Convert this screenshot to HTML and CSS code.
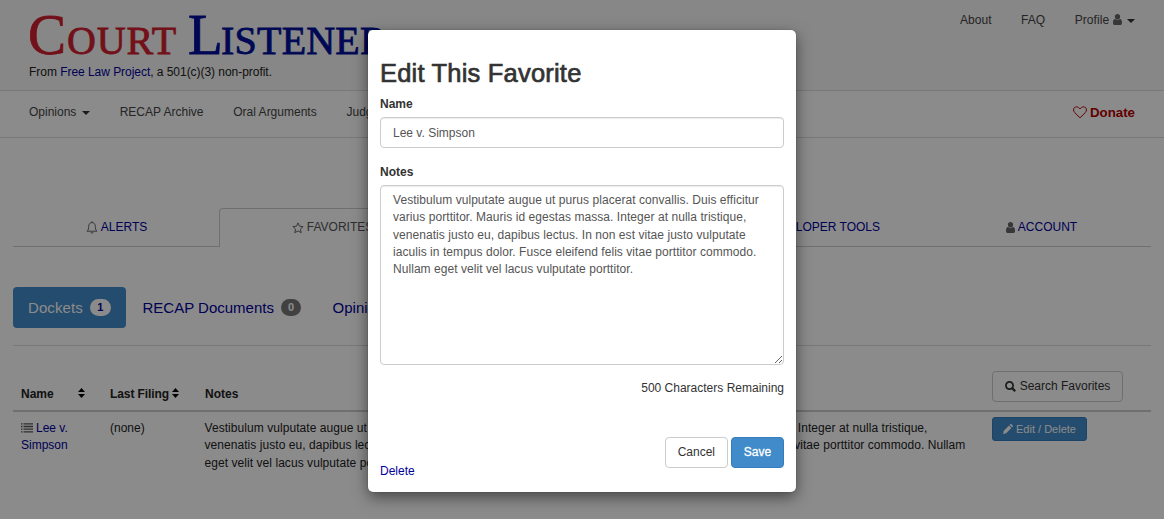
FILE: index.html
```html
<!DOCTYPE html>
<html lang="en">
<head>
<meta charset="utf-8">
<title>Favorites</title>
<link rel="stylesheet" href="styles.css">
</head>
<body>
<svg class="defs" width="0" height="0">
  <symbol id="user" viewBox="0 0 9 11"><path d="M4.5 0a2.6 2.6 0 0 1 2.6 2.7c0 1.6-1 2.9-2.6 2.9S1.900 4.300 1.900 2.700A2.600 2.600 0 0 1 4.500 0zM2 5C3.400 6.500 5.600 6.500 7 5c1.500.1 2 1.800 2 3.700C9 10.200 8.300 11 7.200 11H1.800C.7 11 0 10.200 0 8.700 0 6.800.5 5.100 2 5z"/></symbol>
  <symbol id="sort" viewBox="0 0 7 10"><path d="M3.500 0L7 4H0zM0 6h7L3.500 10z"/></symbol>
</svg>
<div class="page">
  <header class="top">
    <div class="brand">
      <div class="logo"><span class="red"><b class="c">C</b>ourt</span><span class="blue"><b class="l">L</b>istener</span></div>
      <p class="tagline">From <a>Free Law Project</a>, a 501(c)(3) non-profit.</p>
    </div>
    <nav class="links"><span>About</span><span>FAQ</span><span>Profile <svg class="user" width="9" height="11"><use href="#user"/></svg><i class="caret"></i></span></nav>
  </header>
  <nav class="mainnav">
    <span>Opinions<i class="caret"></i></span><span>RECAP Archive</span><span>Oral Arguments</span><span>Judges</span>
    <span class="donate"><svg width="14" height="13" viewBox="0 0 14 13"><path d="M7 11.800L1.600 6.500C.3 5.200.2 3 1.400 1.700 2.800.4 5.300.5 7 3 8.700.5 11.200.4 12.600 1.700c1.200 1.300 1.100 3.500-.2 4.800z" fill="none" stroke="currentColor"/></svg>Donate</span>
  </nav>
  <main class="content">
    <nav class="tabs">
      <a><svg width="12" height="13" viewBox="0 0 12 13"><path d="M6 .3v1M1 10.200C2.500 9 2.600 7.500 2.700 5.200 2.900 2.700 4 1.600 6 1.600s3.100 1.100 3.300 3.600c.1 2.300.2 3.800 1.700 5zM4.800 11.200c.3 1.400 2.100 1.400 2.400 0" fill="none" stroke="#666"/></svg>ALERTS</a>
      <a class="on"><svg width="12" height="12" viewBox="0 0 12 12"><path d="M6 .9l1.500 3.300 3.600.4-2.700 2.500.8 3.600L6 8.900l-3.200 1.800.8-3.600L.9 4.600l3.600-.4z" fill="none" stroke="#666"/></svg>FAVORITES</a>
      <a>TAGS</a>
      <a class="dev">DEVELOPER TOOLS</a>
      <a><svg width="9" height="11" class="gray"><use href="#user"/></svg>ACCOUNT</a>
    </nav>
    <nav class="pills"><a class="active">Dockets<em>1</em></a><a>RECAP Documents<em>0</em></a><a>Opinions<em>0</em></a></nav>
    <div class="table">
      <div class="row head">
        <div class="namehead">Name<svg width="7" height="10"><use href="#sort"/></svg></div>
        <div class="filing">Last Filing<svg class="near" width="7" height="10"><use href="#sort"/></svg></div>
        <div>Notes</div>
        <div class="action"><button class="btn search"><svg width="11" height="11" viewBox="0 0 11 11"><path d="M6.900 6.900L10.200 10.200" stroke="currentColor" stroke-width="2.200"/><circle cx="4.500" cy="4.500" r="3.600" fill="none" stroke="currentColor" stroke-width="1.700"/></svg>Search Favorites</button></div>
      </div>
      <div class="row">
        <div><a><svg class="list" width="12" height="10" viewBox="0 0 12 10"><path d="M0 .8h1.500M0 3.500h1.500M0 6.200h1.500M0 8.900h1.500M2.500.8H12M2.500 3.500H12M2.500 6.200H12M2.500 8.900H12" stroke="#555" stroke-width="1.300"/></svg>Lee v. Simpson</a></div>
        <div>(none)</div>
        <div class="notes">Vestibulum vulputate augue ut purus placerat convallis. Duis efficitur varius porttitor. Mauris id egestas massa. Integer at nulla tristique,<br>venenatis justo eu, dapibus lectus. In non est vitae justo vulputate iaculis in tempus dolor. Fusce eleifend felis vitae porttitor commodo. Nullam<br>eget velit vel lacus vulputate porttitor.</div>
        <div class="action"><button class="btn primary edit"><svg width="10" height="10" viewBox="0 0 10 10"><path d="M0 10l.8-3.200L6 1.600l2.400 2.400-5.200 5.200zM6.700.9l.6-.6c.4-.4.8-.4 1.200 0l1.200 1.200c.4.4.4.800 0 1.200l-.6.6z" fill="currentColor"/></svg>Edit / Delete</button></div>
      </div>
    </div>
  </main>
</div>
<div class="backdrop"></div>
<form class="modal">
  <h2>Edit This Favorite</h2>
  <label>Name</label>
  <input value="Lee v. Simpson">
  <label class="second">Notes</label>
  <textarea>Vestibulum vulputate augue ut purus placerat convallis. Duis efficitur varius porttitor. Mauris id egestas massa. Integer at nulla tristique, venenatis justo eu, dapibus lectus. In non est vitae justo vulputate iaculis in tempus dolor. Fusce eleifend felis vitae porttitor commodo. Nullam eget velit vel lacus vulputate porttitor.</textarea>
  <p class="remaining">500 Characters Remaining</p>
  <div class="actions"><a>Delete</a><button type="button" class="btn">Cancel</button><button type="button" class="btn primary save">Save</button></div>
</form>
</body>
</html>
```
FILE: styles.css
```css
* { box-sizing: border-box; }
body { margin: 0; height: 519px; overflow: hidden; background: #fff; color: #333; font: 12px/17.14px "Liberation Sans", Arial, sans-serif; }
a { color: #00009c; text-decoration: none; }
p { margin: 0; }
.defs { position: absolute; }
.top { height: 91px; background: #f7f7f7; border-bottom: 1px solid #ddd; display: flex; justify-content: space-between; padding: 0 29px; }
.logo { height: 64px; padding-top: 4px; font: 40px/62px "Liberation Serif", serif; -webkit-text-stroke: .8px; display: flex; text-transform: uppercase; white-space: nowrap; }
.logo b { font-size: 57px; font-weight: 400; }
.red { color: #d2202f; margin-left: -1px; letter-spacing: .9px; }
.blue { color: #000f9c; margin-left: 11px; letter-spacing: .2px; }
.l { margin-right: -2px; }
.tagline { color: #222; letter-spacing: -.04px; }
.links { display: flex; gap: 29.5px; padding-top: 12px; color: #444; letter-spacing: .05px; }
.user { vertical-align: -1px; fill: #666; }
.gray { fill: #666; }
.caret { display: inline-block; border: 4px solid transparent; border-top-color: #333; border-bottom: 0; margin-left: 5.5px; vertical-align: 1px; }
.mainnav { height: 47px; border-bottom: 1px solid #ddd; display: flex; gap: 29.8px; align-items: center; padding: 0 29px 2px; color: #444; }
.donate { margin-left: auto; color: #b50000; font-weight: 700; font-size: 13.3px; display: flex; align-items: center; gap: 3px; }
.content { padding: 70px 13px 0; }
.tabs { display: grid; grid-template-columns: 206px 230px 222px 260px 220px; height: 39px; }
.tabs a { border-bottom: 1px solid #ccc; display: flex; align-items: center; justify-content: center; gap: 3px; padding: 1px 0 0 1px; }
.tabs .on { border: 1px solid #ccc; border-bottom: 0; border-radius: 4px 4px 0 0; color: #555; padding: 0 3px 1px 0; }
.tabs .dev { justify-content: flex-end; padding-right: 51px; }
.pills { display: flex; gap: 1.5px; margin-top: 40px; height: 59px; border-bottom: 1px solid #ddd; }
.pills a { height: 41px; padding: 0 15px; border-radius: 4px; display: flex; align-items: center; font-size: 15px; gap: 7px; }
.pills em { font: bold 11px/17px "Liberation Sans", sans-serif; background: #777; color: #fff; border-radius: 9px; padding: 0 7px; }
.pills .active { background: #428bca; color: #fff; width: 113px; letter-spacing: .1px; }
.pills .active em { background: #fff; color: #00009c; width: 21px; text-align: center; }
.row { display: grid; grid-template-columns: 89px 95px 787px 167px; }
.row > div { padding: 8px 0 0 8px; color: #222; }
.row .notes { padding-left: 7.5px; letter-spacing: .058px; line-height: 17.3px; }
.head { height: 66px; border-bottom: 2px solid #ccc; font-weight: 700; }
.head > div { padding-top: 40px; }
.head .filing { letter-spacing: -.1px; }
.head .action { padding-top: 25px; }
.row .action { font-weight: 400; }
.row:not(.head) .action { padding-top: 5px; }
.namehead svg { margin-left: 24px; }
.near { margin-left: 3px; }
.list { margin-right: 3px; vertical-align: -1px; }
.btn { font: 12px/17px "Liberation Sans", sans-serif; height: 31px; padding: 0 12px; border: 1px solid #ccc; border-radius: 4px; background: #fff; color: #333; display: inline-flex; align-items: center; justify-content: center; white-space: nowrap; }
.btn.search { width: 131px; padding: 0; gap: 4px; }
.btn.primary { background: #428bca; border-color: #357ebd; color: #fff; }
.btn.edit { height: 24px; width: 95px; padding: 0; border-radius: 3px; font-size: 11px; gap: 3px; }
.backdrop { position: absolute; inset: 0; background: rgba(0,0,0,.455); }
.modal { position: absolute; left: 368px; top: 30px; width: 428px; height: 462px; background: #fff; border-radius: 5px; padding: 28px 12px 0; box-shadow: 0 5px 15px rgba(0,0,0,.5), 0 0 1px rgba(0,0,0,.5); }
.modal h2 { margin: 0 0 8px; font-size: 25.5px; letter-spacing: .2px; line-height: 30px; font-weight: 400; -webkit-text-stroke: .7px #333; }
.modal label { display: block; font-weight: 700; margin-bottom: 4px; }
.modal .second { margin: 16px 0 4px; }
.modal input, .modal textarea { display: block; width: 404px; border: 1px solid #ccc; border-radius: 4px; font: inherit; color: #555; padding: 6px 12px; box-shadow: inset 0 1px 1px rgba(0,0,0,.075); outline: 0; }
.modal input { height: 31px; }
.modal textarea { height: 180px; resize: vertical; overflow: hidden; letter-spacing: .055px; }
.remaining { text-align: right; margin-top: 15px; }
.actions { display: flex; gap: 3px; margin-top: 40px; align-items: flex-start; }
.actions a { margin: 26px auto 0 0; }
.actions .save { width: 53px; -webkit-text-stroke: .3px #fff; }
```
